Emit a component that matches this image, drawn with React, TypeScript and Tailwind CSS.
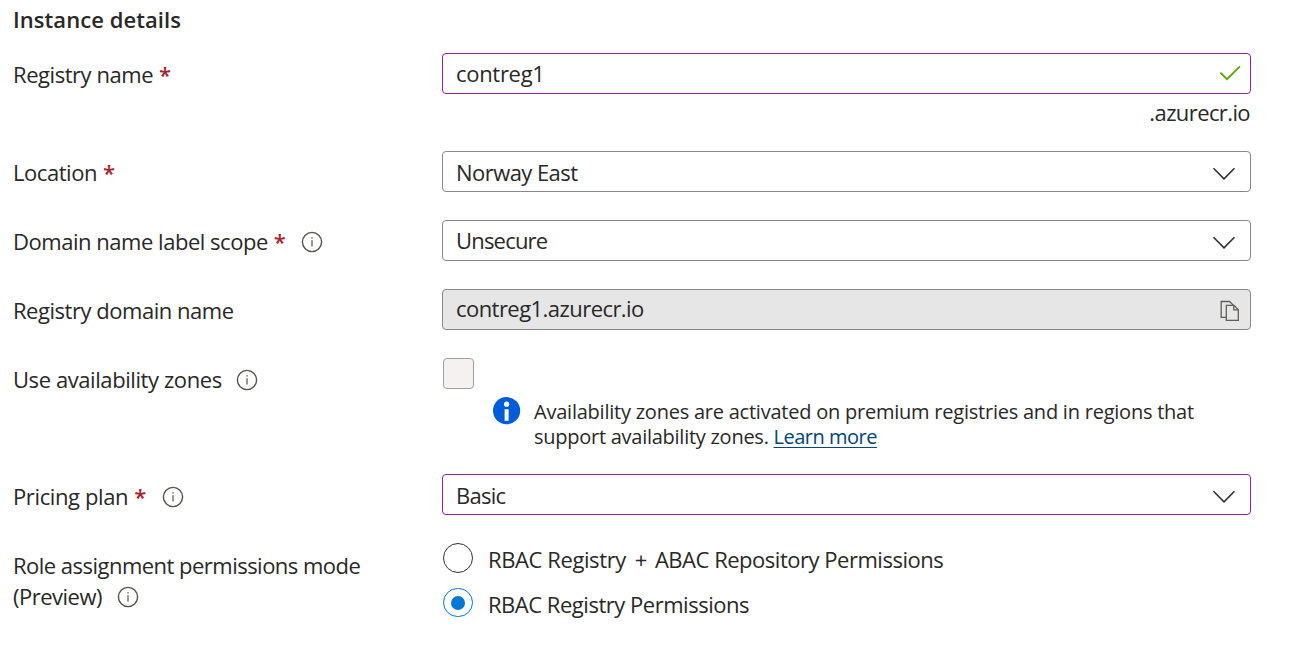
import type { ReactNode } from "react";

function InfoIcon() {
  return (
    <svg width="22" height="22" viewBox="0 0 22 22" className="mt-[2px] shrink-0" fill="none" stroke="#55534f">
      <circle cx="11" cy="11" r="9.6" strokeWidth="1.4" />
      <path d="M11 9.2V15.4" strokeWidth="1.2" />
      <path d="M11 6.2V7.6" strokeWidth="1.4" />
    </svg>
  );
}

function Chevron() {
  return (
    <svg width="24" height="14" viewBox="0 0 24 14" className="mt-[4px] mr-[14px] shrink-0" fill="none" stroke="#323130" strokeWidth="1.6">
      <path d="M1.5 1.3L12 11.8L22.5 1.3" />
    </svg>
  );
}

function CheckIcon() {
  return (
    <svg width="22" height="16" viewBox="0 0 22 16" className="mr-[9px] mb-px shrink-0" fill="none" stroke="#57a300" strokeWidth="1.7">
      <path d="M1.4 7.6L8 14.2L20.9 1.3" />
    </svg>
  );
}

function CopyIcon() {
  return (
    <svg width="20" height="22" viewBox="0 0 20 22" className="mt-[3px] mr-[10px] shrink-0" fill="none" stroke="#605e5c" strokeWidth="1.3">
      <path d="M6 17.3H1.2V1.5H9.6L13.5 5.4" />
      <path d="M6.3 5.4H14L18.3 9.7V20.4H6.3Z" />
      <path d="M13.8 5.4V9.8H18.3" />
    </svg>
  );
}

function Row({ className, label, children }: { className: string; label: ReactNode; children: ReactNode }) {
  return (
    <div className={`flex items-start ${className}`}>
      <div className="w-[429px] shrink-0">{label}</div>
      <div className="w-[809px] shrink-0">{children}</div>
    </div>
  );
}

function Label({ className = "", text, required, info }: { className?: string; text: string; required?: boolean; info?: string }) {
  return (
    <div className="flex h-[31px] items-center pt-[3px]">
      <span className={`whitespace-nowrap ${className}`}>{text}</span>
      {required && <span className="ml-[6px] w-[11px] font-semibold text-[#a4262c]">*</span>}
      {info && <span className={info}><InfoIcon /></span>}
    </div>
  );
}

function Field({ className, textClass = "", value, icon }: { className: string; textClass?: string; value: string; icon: ReactNode }) {
  return (
    <div className={`flex h-[41px] items-center justify-between rounded-[4px] border pl-[13px] ${className}`}>
      <span className={textClass}>{value}</span>
      {icon}
    </div>
  );
}

export default function App() {
  return (
    <main className="h-[656px] w-[1290px] overflow-hidden bg-white pl-[13px] font-['Open_Sans',sans-serif] text-[22px] leading-[31px] text-[#292827]">
      <h2 className="h-[53px] pt-[4px] font-semibold tracking-[0.06px]">Instance details</h2>

      <Row className="h-[98px]" label={<div className="pt-[4px]"><Label className="tracking-[-0.45px]" text="Registry name" required /></div>}>
        <Field className="border-[#8a24a2]" textClass="tracking-[-0.3px]" value="contreg1" icon={<CheckIcon />} />
        <div className="pt-[3px] pr-px text-right tracking-[-0.6px]">.azurecr.io</div>
      </Row>

      <Row className="h-[69px]" label={<div className="pt-[4px]"><Label className="tracking-[-0.45px]" text="Location" required /></div>}>
        <Field className="border-[#8a8886]" textClass="pt-[2px] tracking-[-0.55px]" value="Norway East" icon={<Chevron />} />
      </Row>

      <Row className="h-[69px]" label={<div className="pt-[4px]"><Label className="tracking-[-0.47px]" text="Domain name label scope" required info="ml-[16px]" /></div>}>
        <Field className="border-[#8a8886]" textClass="tracking-[-0.8px]" value="Unsecure" icon={<Chevron />} />
      </Row>

      <Row className="h-[69px]" label={<div className="pt-[4px]"><Label className="tracking-[-0.47px]" text="Registry domain name" /></div>}>
        <Field className="border-[#8a8886] bg-[#e6e6e6]" textClass="pb-[2px] tracking-[-0.55px]" value="contreg1.azurecr.io" icon={<CopyIcon />} />
      </Row>

      <Row className="h-[116px]" label={<div className="pt-[4px]"><Label className="tracking-[-0.42px]" text="Use availability zones" info="ml-[14px]" /></div>}>
        <div className="ml-px h-[31px] w-[31px] rounded-[4px] border border-[#a19f9d] bg-[#f3f2f1]" />
        <div className="flex pt-[8px] pl-[51px]">
          <svg width="28" height="28" viewBox="0 0 28 28" className="shrink-0">
            <circle cx="13.6" cy="13.7" r="13.6" fill="#015cda" />
            <circle cx="13.6" cy="7.2" r="2.6" fill="white" />
            <path d="M11.6 12.2H15.6V23.8H11.6Z" fill="white" />
          </svg>
          <p className="ml-[13px] pt-[2px] text-[20px] leading-[25px] tracking-[-0.23px] whitespace-nowrap">
            Availability zones are activated on premium registries and in regions that<br />
            <span className="tracking-[-0.26px]">support availability zones. </span><a className="tracking-[-0.5px] text-[#004578] underline decoration-1 underline-offset-[3px]">Learn more</a>
          </p>
        </div>
      </Row>

      <Row className="h-[69px]" label={<div className="pt-[5px]"><Label className="tracking-[-0.38px]" text="Pricing plan" required info="ml-[17px]" /></div>}>
        <Field className="border-[#8a24a2]" textClass="pt-[2px] tracking-[-0.75px]" value="Basic" icon={<Chevron />} />
      </Row>

      <Row className="h-[113px]" label={<div className="pt-[5px]"><Label className="tracking-[-0.52px]" text="Role assignment permissions mode" /><Label className="tracking-[-0.5px]" text="(Preview)" info="ml-[15px]" /></div>}>
        <div className="flex h-[45px]">
          <span className="ml-px h-[30px] w-[30px] rounded-full border border-[#323130]" />
          <span className="ml-[15px] pt-[1px] tracking-[-0.4px]">
            RBAC Registry<span className="mr-[7px] ml-[9px] tracking-[0.5px]">+</span>
            <span className="tracking-[-0.48px]">ABAC Repository Permissions</span>
          </span>
        </div>
        <div className="flex h-[45px]">
          <span className="ml-px flex h-[29px] w-[30px] items-center justify-center rounded-full border border-[#0078d4]">
            <span className="h-[14px] w-[14px] rounded-full bg-[#0078d4]" />
          </span>
          <span className="ml-[15px] pt-[1px] tracking-[-0.48px]">RBAC Registry Permissions</span>
        </div>
      </Row>
    </main>
  );
}
